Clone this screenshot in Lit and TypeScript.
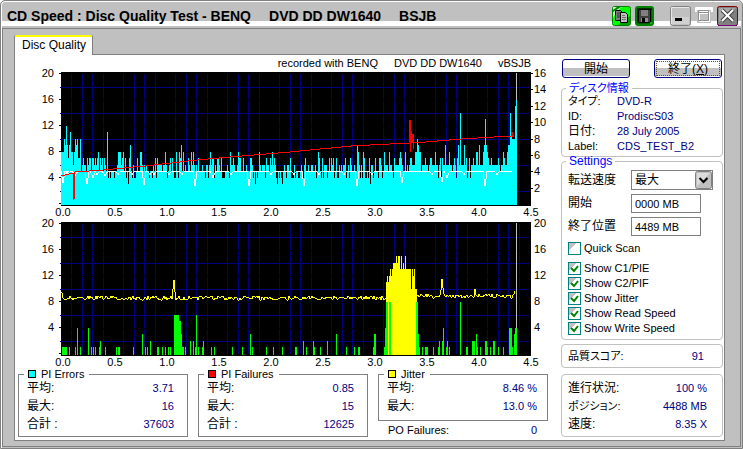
import { LitElement, html, svg, css } from "lit";
import { customElement, property } from "lit/decorators.js";

const PLOT = { left: 46, top: 2, width: 470, height: 134, zero: 134, unit: 13 / 2, end: 455 };

/** Small repeatable noise source, so a trace looks the same on every render. */
function noise(seed: number) {
  let s = seed;
  return () => {
    s = (s * 1103515245 + 12345) % 2147483648;
    return s / 2147483648;
  };
}

const LEAD = "888a9c979b8868a9a77a567665767757767678576757654454555455688758"
  .split("")
  .map((c) => parseInt(c, 16));

const PIE_PEAKS: Record<number, number> = {
  46: 11, 59: 8, 60: 6, 61: 7, 62: 8, 63: 5, 67: 3, 68: 7, 69: 9, 79: 8, 80: 8, 94: 7, 96: 7, 104: 8, 111: 7,
  115: 8, 118: 8, 120: 9, 122: 8, 127: 7, 130: 8, 132: 8, 149: 8, 151: 7, 157: 7, 160: 7, 169: 8, 172: 7,
  177: 8, 179: 7, 182: 7, 190: 7, 194: 3, 198: 8, 205: 7, 209: 7, 211: 8, 213: 7, 216: 3, 221: 3, 257: 8, 258: 7,
  261: 7, 268: 7, 275: 7, 284: 7, 296: 9, 297: 8, 302: 8, 309: 3, 314: 7, 323: 8, 328: 8, 333: 7, 339: 8, 340: 7,
  344: 8, 350: 7, 354: 8, 355: 8, 356: 10, 357: 9, 358: 8, 359: 8, 364: 7, 369: 7, 374: 8, 379: 7, 384: 9,
  388: 8, 393: 7, 397: 9, 399: 14, 403: 9, 405: 7, 408: 7, 412: 7, 415: 8, 416: 8, 418: 9, 422: 8, 423: 9,
  424: 13, 425: 9, 426: 8, 427: 7, 437: 7, 442: 8, 443: 7, 446: 8, 447: 9, 448: 9, 449: 14, 450: 11, 451: 10,
  452: 10, 453: 10, 454: 15, 455: 16,
};

function errorLevels(): number[] {
  const rnd = noise(1640);
  return Array.from({ length: PLOT.end + 1 }, (_, i) => {
    const r = rnd();
    if (PIE_PEAKS[i]) return PIE_PEAKS[i];
    if (i < LEAD.length) return LEAD[i];
    if (i > 349) return r < 0.08 ? 4 : r < 0.2 ? 5 : r < 0.9 ? 6 : 7;
    if (i > 200) return r < 0.25 ? 4 : r < 0.6 ? 5 : r < 0.95 ? 6 : 7;
    return r < 0.2 ? 4 : r < 0.6 ? 5 : r < 0.92 ? 6 : 7;
  });
}

/** [first column, last column, level] */
const FAILURES: [number, number, number][] = [
  [1, 5, 1], [8, 8, 1], [14, 14, 1], [16, 16, 4], [19, 19, 1], [27, 27, 4], [30, 30, 1], [32, 32, 1], [34, 34, 1],
  [38, 38, 1], [39, 39, 2], [44, 44, 1], [55, 55, 1], [57, 58, 1], [72, 72, 1], [81, 81, 3], [84, 84, 1],
  [86, 86, 1], [89, 89, 2], [96, 97, 1], [101, 101, 1], [104, 104, 1], [107, 107, 1], [109, 109, 1],
  [113, 117, 6], [118, 119, 5], [120, 120, 3], [121, 122, 1], [124, 124, 1], [129, 129, 2], [132, 132, 2],
  [134, 134, 1], [135, 135, 6], [137, 137, 1], [141, 141, 1], [142, 142, 2], [150, 150, 1], [153, 153, 1],
  [171, 171, 1], [181, 181, 1], [189, 189, 3], [191, 191, 1], [205, 205, 1], [212, 212, 1], [221, 221, 1],
  [234, 235, 1], [242, 242, 2], [245, 245, 1], [252, 252, 2], [253, 253, 1], [259, 259, 1], [266, 266, 2],
  [275, 275, 3], [285, 285, 1], [293, 293, 1], [297, 298, 1], [312, 312, 1], [313, 314, 3], [323, 323, 1],
  [324, 324, 4], [325, 326, 8], [328, 329, 8], [355, 356, 8], [357, 357, 3], [358, 358, 1], [361, 361, 1],
  [364, 366, 1], [372, 372, 1], [377, 377, 1], [378, 378, 2], [381, 381, 2], [382, 382, 4], [385, 385, 1],
  [386, 386, 2], [388, 388, 1], [399, 399, 8], [405, 406, 1], [411, 413, 2], [415, 415, 3], [416, 416, 1],
  [419, 419, 1], [424, 425, 2], [426, 426, 1], [429, 429, 1], [432, 433, 2], [437, 437, 1], [442, 442, 1],
  [448, 450, 4], [451, 451, 1], [453, 453, 3], [454, 455, 4],
];

const BURST = [11, 12, 11, 12, 13, 12, 13, 14, 14, 14, 15, 14, 15, 15, 13, 15, 13, 14, 13, 15, 13, 13, 13, 13, 13, 10,
  13, 12, 13, 10, 10];

const DIPS: [number, number][] = [
  [2, 12], [5, 4], [7, 3], [14, 5], [26, 13], [32, 7], [36, 4], [44, 5], [57, 4], [71, 4], [83, 14], [89, 4], [93, 4],
  [108, 4], [121, 4], [134, 15], [152, 7], [170, 4], [188, 15], [210, 4], [233, 4], [243, 15], [258, 4], [283, 4],
  [296, 15], [311, 4], [341, 12], [371, 4], [381, 11], [386, 7], [403, 4], [424, 15], [436, 4],
];

const SPEED: [number, number][] = [
  [0, 106], [12, 103], [13, 130], [14, 102], [42, 100], [84, 96], [136, 90], [169, 87], [229, 82], [290, 76],
  [348, 73], [349, 50], [349, 82], [350, 61], [351, 73], [352, 64], [352, 79], [353, 73], [400, 69], [450, 66],
  [451, 62], [452, 67], [453, 65],
];

const bar = (from: number, to: number, level: number) => {
  const h = Math.round(level * PLOT.unit);
  return `M${PLOT.left + from} ${PLOT.zero + 1}v${-h - 1}h${to - from + 1}v${h + 1}z`;
};

function bars(levels: number[], start = 0) {
  return levels.map((l, i) => bar(start + i, start + i, l)).join("");
}

function writeSpeed() {
  const y = 101;
  let d = `M${PLOT.left} 107l1 -4`;
  for (const [x, depth] of DIPS) {
    const c = PLOT.left + x;
    const w = depth > 8 ? 2 : 3;
    d += `L${c - w} ${y}L${c - 1} ${y + Math.round(depth / 2)}L${c} ${y + depth}L${c + 1} ${y + Math.round(depth / 2)}L${c + w} ${y}`;
  }
  return `${d}L${PLOT.left + 451} ${y}`;
}

function jitter() {
  const rnd = noise(77);
  const special: Record<number, number> = {
    0: 72, 1: 73, 112: 69, 113: 60, 114: 72, 380: 70, 381: 59, 382: 68, 414: 69, 453: 74, 454: 71,
  };
  const pts: string[] = [];
  for (let i = 0; i <= 454; i++) {
    const base = i > 350 ? 76 : 78;
    const y = special[i] ?? base + Math.round((rnd() - 0.5) * 4);
    pts.push(`${PLOT.left + i} ${y}`);
  }
  return `M${pts.join("L")}`;
}

function speedPath() {
  return "M" + SPEED.map(([x, y]) => `${PLOT.left + x} ${y}`).join("L");
}

@customElement("scan-chart")
class ScanChart extends LitElement {
  static styles = css`
    :host { display: block; }
    svg { display: block; width: 100%; height: auto; overflow: visible; }
    text { font: 11px "Liberation Sans", Arial, sans-serif; fill: #000; }
    .left { text-anchor: end; }
    .below { text-anchor: middle; }
    .crisp { shape-rendering: crispEdges; }
    .grid { stroke: #000080; fill: none; }
    .tick { stroke: #000; fill: none; }
    .gap { stroke: #000; fill: none; }
    .cyan { fill: #00ffff; }
    .green { fill: #00ff00; }
    .yellow { fill: #ffff00; }
    .speed { stroke: #ff0000; fill: none; stroke-linejoin: bevel; }
    .write { stroke: #fff; fill: none; stroke-linejoin: bevel; }
    .jitter { stroke: #ffff00; fill: none; stroke-linejoin: bevel; }
    .cursor { fill: #c0c0c0; }
  `;

  @property() kind: "errors" | "failures" = "errors";

  private frame() {
    const { left, top, width, height } = PLOT;
    let grid = "";
    let gaps = "";
    let ticks = "";
    for (let i = 1; i < 45; i++) {
      if (i % 5) grid += `M${left + Math.round(i * 10.4) + 0.5} ${top + 2}V${top + height - 1}`;
    }
    for (let i = 0; i < 5; i++) {
      grid += `M${left - 1} ${17.5 + i * 26}H${left + width - 2}`;
      gaps += `M${left} ${30.5 + i * 26}H${left + width}`;
    }
    for (let i = 0; i < 6; i++) ticks += `M${left - 2} ${3.5 + i * 26}H${left}`;
    return svg`
      <rect class="crisp" x=${left} y=${top} width=${width} height=${height}></rect>
      <path class="grid crisp" d=${grid}></path>
      <path class="gap crisp" d=${gaps}></path>
      <path class="tick crisp" d=${ticks}></path>`;
  }

  private labels() {
    const { left, width } = PLOT;
    const errors = this.kind === "errors";
    const right = errors ? [16, 14, 12, 10, 8, 6, 4, 2] : [20, 16, 12, 8, 4];
    const step = errors ? 16.4 : 26;
    return svg`
      ${[20, 16, 12, 8, 4].map((n, i) => svg`<text class="left" x="39" y=${7 + i * 26}>${n}</text>`)}
      ${right.map((n, i) => svg`<text x=${left + width + 3} y=${7 + Math.round(i * step)}>${n}</text>`)}
      ${Array.from({ length: 10 }, (_, i) => svg`
        <text class="below" x=${48 + i * 52} y="146">${(i / 2).toFixed(1)}</text>`)}
      ${errors ? svg`<path class="tick crisp" d=${right.map((_, i) =>
        `M${left + width} ${3.5 + Math.round(i * step)}h2`).join("")}></path>` : null}`;
  }

  private traces() {
    const cursor = svg`<rect class="cursor crisp" x=${PLOT.left + PLOT.end} y="3" width="1" height="131"></rect>`;
    if (this.kind === "errors") {
      return svg`${cursor}
        <path class="cyan crisp" d=${bars(errorLevels())}></path>
        <path class="write crisp" d=${writeSpeed()}></path>
        <path class="speed crisp" d=${speedPath()}></path>`;
    }
    return svg`${cursor}
      <path class="yellow crisp" d=${bars(BURST, 325)}></path>
      <path class="jitter crisp" d=${jitter()}></path>
      <path class="green crisp" d=${FAILURES.map((f) => bar(...f)).join("")}></path>`;
  }

  render() {
    return html`<svg viewBox="0 0 546 150" role="img" aria-label=${this.kind}>
      ${this.frame()}${this.traces()}${this.labels()}
    </svg>`;
  }
}

@customElement("app-root")
class AppRoot extends LitElement {
  static styles = css`
    :host {
      display: block;
      font: 12px/15px "Liberation Sans", "Noto Sans CJK JP", sans-serif;
      font-feature-settings: "palt";
      color: #000;
    }
    * { box-sizing: border-box; }
    button, input, select { font: inherit; color: inherit; margin: 0; padding: 0; }
    .window {
      background: #c0c0c0;
      border: 1px solid #808080;
      padding: 1px;
      box-shadow: inset 1px 1px #fff;
      border-radius: 5px 5px 0 0;
    }
    .title {
      display: flex;
      align-items: center;
      height: 26px;
      padding: 1px 3px 0 5px;
      border-radius: 4px 4px 0 0;
      background: linear-gradient(#c0c0c0 19px, #fff 19px, #fff 24px, #c0c0c0 24px);
    }
    h1 { flex: 1; display: flex; gap: 18px; margin: 0; font-size: 14px; line-height: 24px; white-space: nowrap; }
    .tools { display: flex; gap: 4px; margin-right: 16px; }
    .controls { display: flex; gap: 3px; }
    .title button { border: 0; background: none; height: 20px; }
    .title svg { display: block; }
    .client { border: 1px solid #808080; padding: 6px 15px 5px 11px; }
    .tab {
      position: relative;
      display: block;
      height: 20px;
      margin-bottom: -1px;
      padding: 0 7px;
      width: 79px;
      text-align: left;
      white-space: nowrap;
      background: #fff;
      border: solid #808080;
      border-width: 0 1px;
      box-shadow: inset 0 2px #ffff00;
      border-radius: 2px 2px 0 0;
    }
    .panel {
      display: grid;
      grid-template-columns: 1fr 162px;
      padding: 0 1px 3px 0;
      background: #fff;
      border: 1px solid #808080;
    }
    .caption {
      display: flex;
      justify-content: flex-end;
      gap: 16px;
      padding-right: 30px;
      font-size: 11px;
      line-height: 17px;
      height: 15px;
    }
    .stats { display: grid; grid-template-columns: repeat(3, 1fr); gap: 10px; padding: 0 13px 0 3px; }
    fieldset { margin: 0; min-width: 0; border: 1px solid #808080; }
    legend {
      display: flex;
      align-items: center;
      gap: 5px;
      margin-left: -3px;
      padding: 0 5px 0 4px;
      height: 8px;
      font-size: 11px;
      line-height: 8px;
    }
    .stat { padding: 1px 13px 3px 8px; }
    .short { padding-bottom: 5px; padding-right: 10px; }
    .swatch { width: 8px; height: 8px; border: 1px solid #000; }
    .c-pie { background: #00ffff; }
    .c-pif { background: #ff0000; }
    .c-jit { background: #ffff00; }
    dl { margin: 0; }
    dl div { display: flex; justify-content: space-between; height: 18px; line-height: 18px; white-space: nowrap; }
    dt, dd { margin: 0; }
    dd { color: #000080; font-size: 11px; }
    .small { font-size: 11px; }
    .po { padding: 0 11px 0 10px; height: 16px; }
    .side { padding-top: 4px; }
    .actions { display: flex; justify-content: space-between; padding: 0 1px; height: 23px; }
    .action {
      width: 68px;
      height: 19px;
      border: 1px solid #000080;
      border-radius: 3px;
      line-height: 16px;
      background: linear-gradient(#fff 8px, #c0c0c0 8px, #c0c0c0 16px, #fff 16px);
    }
    .quit { outline: 1px dotted #606000; outline-offset: -3px; }
    .box { border-color: #c0c0c0; border-radius: 4px; }
    .box legend { color: #0000ff; margin-left: -2px; padding: 0 3px; }
    .disc { padding: 0 6px 2px; }
    .disc legend { height: 12px; line-height: 12px; }
    .disc dl div { display: grid; grid-template-columns: 49px 1fr; height: 15px; line-height: 15px; }
    .settings { padding: 5px 9px 3px 6px; }
    .settings legend { font-size: 12px; }
    .field { display: grid; grid-template-columns: 63px 1fr; margin-bottom: 4px; align-items: center; }
    .pick { position: relative; display: block; height: 20px; }
    select, .text { width: 100%; border: 1px solid #808080; border-radius: 0; background: #fff; padding: 0 3px; }
    select { appearance: none; height: 20px; display: block; }
    .text { width: 70px; height: 19px; font-size: 11px; }
    .arrow { position: absolute; right: 1px; top: 1px; pointer-events: none; }
    .check { display: flex; align-items: center; gap: 3px; height: 15px; font-size: 11px; white-space: nowrap; }
    .first { margin: 5px 0; }
    .check input {
      appearance: none;
      width: 13px;
      height: 13px;
      border: 1px solid #008080;
      background: linear-gradient(135deg, #c0c0c0 35%, #fff 35%);
    }
    .check input:checked {
      background:
        url("data:image/svg+xml,%3Csvg xmlns='http://www.w3.org/2000/svg' width='11' height='11'%3E%3Cpath d='M2 5l3 3 4-5' fill='none' stroke='%23008000' stroke-width='2'/%3E%3C/svg%3E") no-repeat,
        linear-gradient(135deg, #c0c0c0 35%, #fff 35%);
    }
    .score { margin-top: 4px; padding: 2px 18px 2px 6px; }
    .progress { margin-top: 6px; padding: 4px 15px 3px 6px; }
  `;

  private rows(rows: [string, string][], cls = "") {
    return html`<dl class=${cls}>${rows.map(([k, v]) => html`<div>
      <dt class=${/[A-Za-z\u30a0-\u30ff]/.test(k) ? "small" : ""}>${k}</dt><dd>${v}</dd></div>`)}</dl>`;
  }

  private stat(name: string, cls: string, rows: [string, string][], short = false) {
    return html`<fieldset class="stat ${short ? "short" : ""}">
      <legend><span class="swatch ${cls}"></span>${name}</legend>
      ${this.rows(rows)}
    </fieldset>`;
  }

  private check(label: string, on: boolean, cls = "") {
    return html`<label class="check ${cls}"><input type="checkbox" .checked=${on} />${label}</label>`;
  }

  render() {
    return html`<div class="window">
      <header class="title">
        <h1><span>CD Speed : Disc Quality Test - BENQ</span><span>DVD DD DW1640</span><span>BSJB</span></h1>
        <div class="tools">
          <button aria-label="Copy"><svg width="19" height="20" viewBox="0 0 19 20">
            <rect x=".5" y=".5" width="18" height="19" rx="2" fill="#00ff00" stroke="#008000" />
            <path d="M1 1h9L5 5L1 12z" fill="#c0ffc0" /><path d="M1 6L9 1H5L1 4z" fill="#008000" />
            <path d="M6 19l12-9v9z" fill="#00a000" />
            <path d="M3.500 4.500h5l2 2v8h-7z" fill="#808080" stroke="#000" />
            <path d="M8.500 6.500h5l2 2v8h-7z" fill="#c0c0c0" stroke="#000" />
            <path d="M5 7h3M5 9h3M5 11h3" stroke="#303030" /><path d="M10 9.500h3M10 11.500h4M10 13.500h4" stroke="#707070" />
          </svg></button>
          <button aria-label="Save"><svg width="19" height="20" viewBox="0 0 19 20">
            <rect x="1" y="1" width="17" height="18" rx="2" fill="#006000" stroke="#008000" stroke-width="2" />
            <path d="M2 2h15v2H4v13H2z" fill="#003000" />
            <path d="M3.500 3.500h12v13h-11l-1-1z" fill="#404040" stroke="#000" />
            <path d="M6 4h7v6H6z" fill="#808080" /><path d="M6 12h7v4H6z" fill="#909090" />
            <path d="M7 12h3v4H7z" fill="#000" /><path d="M15 16h2v2h-2z" fill="#00c000" />
          </svg></button>
        </div>
        <div class="controls">
          <button aria-label="Minimize"><svg width="21" height="20" viewBox="0 0 21 20">
            <rect x=".5" y=".5" width="20" height="19" rx="2" fill="#c0c0c0" stroke="#808080" />
            <path d="M2 11h17v7H2z" fill="#d0d0d0" /><path d="M1.500 18V1.500H19" fill="none" stroke="#e8e8e8" />
            <path d="M5 12h7v3H5z" fill="#000" />
          </svg></button>
          <button aria-label="Maximize"><svg width="20" height="20" viewBox="0 0 20 20">
            <path d="M1 6V2q0-1 1-1h16q1 0 1 1v4h-2V4H3v2z" fill="#fff" /><path d="M3 4h14v13H3z" fill="#c0c0c0" />
            <path d="M5.500 5.500h10v10h-10zM5 7.500h11" fill="none" stroke="#fff" />
            <path d="M4.500 4.500h10v10h-10zM4 6.500h11" fill="none" stroke="#909090" />
          </svg></button>
          <button aria-label="Close"><svg width="21" height="20" viewBox="0 0 21 20">
            <rect x=".5" y=".5" width="20" height="19" rx="2" fill="#808080" stroke="#800000" />
            <path d="M2 2h17L2 16z" fill="#a8a8a8" /><path d="M1 19.500h19" stroke="#800080" />
            <path d="M5 4l11 11M16 4L5 15" stroke="#404040" stroke-width="4" />
            <path d="M5 4l11 11M16 4L5 15" stroke="#fff" stroke-width="2" />
          </svg></button>
        </div>
      </header>
      <main class="client">
        <button class="tab" role="tab" aria-selected="true">Disc Quality</button>
        <div class="panel">
          <section>
            <div class="caption"><span>recorded with BENQ</span><span>DVD DD DW1640</span><span>vBSJB</span></div>
            <scan-chart kind="errors"></scan-chart>
            <scan-chart kind="failures"></scan-chart>
            <div class="stats">
              ${this.stat("PI Errors", "c-pie", [["平均:", "3.71"], ["最大:", "16"], ["合計 :", "37603"]])}
              ${this.stat("PI Failures", "c-pif", [["平均:", "0.85"], ["最大:", "15"], ["合計 :", "12625"]])}
              <div>
                ${this.stat("Jitter", "c-jit", [["平均:", "8.46 %"], ["最大:", "13.0 %"]], true)}
                ${this.rows([["PO Failures:", "0"]], "po")}
              </div>
            </div>
          </section>
          <aside class="side">
            <div class="actions">
              <button class="action">開始</button>
              <button class="action quit">終了(<u>X</u>)</button>
            </div>
            <fieldset class="box disc">
              <legend>ディスク情報</legend>
              ${this.rows([["タイプ:", "DVD-R"], ["ID:", "ProdiscS03"], ["日付:", "28 July 2005"], ["Label:", "CDS_TEST_B2"]])}
            </fieldset>
            <fieldset class="box settings">
              <legend>Settings</legend>
              <div class="field"><label for="speed">転送速度</label>
                <span class="pick"><select id="speed"><option>最大</option></select>
                  <svg class="arrow" width="17" height="18" viewBox="0 0 17 18">
                    <rect x=".5" y=".5" width="16" height="17" rx="2" fill="#c0c0c0" stroke="#808080" />
                    <path d="M2 2h13L2 15z" fill="#dcdcdc" />
                    <path d="M4.500 7l4 4 4-4" fill="none" stroke="#000" stroke-width="2" />
                  </svg></span></div>
              <div class="field"><label for="from">開始</label><input id="from" class="text" .value=${"0000 MB"} /></div>
              <div class="field"><label for="to">終了位置</label><input id="to" class="text" .value=${"4489 MB"} /></div>
              ${this.check("Quick Scan", false, "first")}
              ${["Show C1/PIE", "Show C2/PIF", "Show Jitter", "Show Read Speed", "Show Write Speed"].map((l) => this.check(l, true))}
            </fieldset>
            <fieldset class="box score">${this.rows([["品質スコア:", "91"]])}</fieldset>
            <fieldset class="box progress">
              ${this.rows([["進行状況:", "100 %"], ["ポジション:", "4488 MB"], ["速度:", "8.35 X"]])}
            </fieldset>
          </aside>
        </div>
      </main>
    </div>`;
  }
}
